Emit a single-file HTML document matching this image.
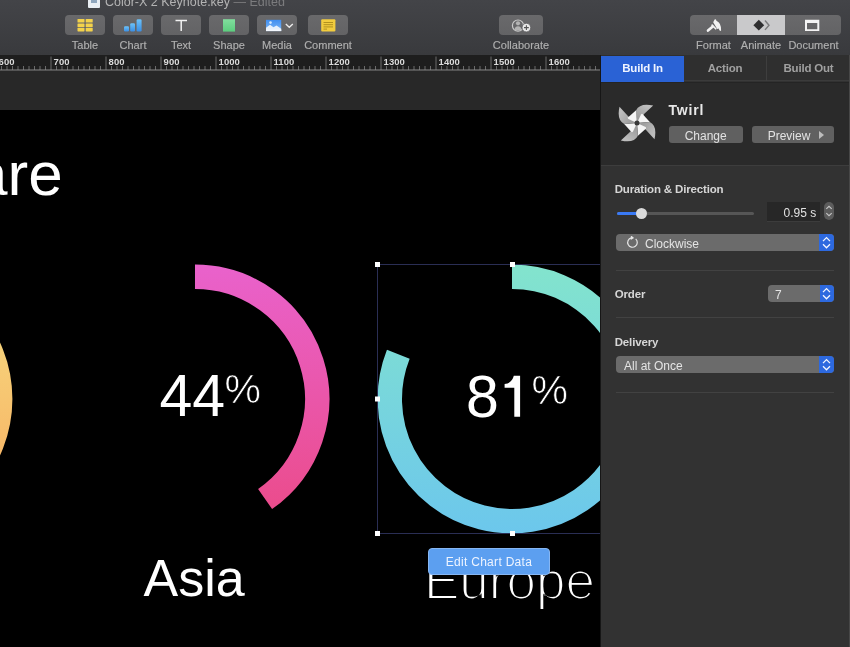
<!DOCTYPE html>
<html><head><meta charset="utf-8">
<style>
*{margin:0;padding:0;box-sizing:border-box}
html,body{width:850px;height:647px;overflow:hidden;background:#000;font-family:"Liberation Sans",sans-serif}
.abs{position:absolute}
#toolbar{left:0;top:0;width:850px;height:55px;background:linear-gradient(#434448,#393a3d)}
.tb{position:absolute;top:15px;width:40px;height:20px;border-radius:4px;background:linear-gradient(#69696b,#636365)}
.lbl{position:absolute;top:39px;font-size:11px;color:#b0b0b0;-webkit-text-stroke:0.15px #b0b0b0;text-align:center;white-space:nowrap}
#title{left:105px;top:-5.5px;font-size:12.5px;color:#b4b4b4;white-space:nowrap}
#ruler{left:0;top:55px;width:600px;height:16px;background:#1e1e1e}
#gray{left:0;top:71px;width:600px;height:39px;background:#282828}
#canvas{left:0;top:110px;width:600px;height:537px;background:#000;overflow:hidden}
#panel{left:600px;top:55px;width:250px;height:592px;background:#323232}
.tab{position:absolute;top:0;height:26px;font-size:11.5px;letter-spacing:-0.2px;font-weight:bold;color:#a0a0a0;text-align:center;line-height:26px}
.sec{position:absolute;left:16px;width:218px;height:1px;background:#424242}
.h{position:absolute;left:16px;font-size:11.5px;font-weight:bold;color:#d6d6d6;white-space:nowrap;letter-spacing:-0.15px}
.pop{position:absolute;height:17.4px;border-radius:4px;background:#6b6b6b;font-size:12px;color:#e4e4e4;white-space:nowrap;line-height:20.5px}
.btn{position:absolute;top:71.3px;height:16.8px;border-radius:3px;background:#606060;font-size:12px;color:#e2e2e2;line-height:20px;white-space:nowrap}
.pop .arr{position:absolute;right:0;top:0;width:14.6px;height:17.4px;background:#2d69df;border-radius:0 4px 4px 0}
</style></head><body><div id="root" style="position:absolute;left:0;top:0;width:850px;height:647px;overflow:hidden;will-change:transform">
<div id="toolbar" class="abs">
  <div id="title" class="abs">Color-X 2 Keynote.key <span style="color:#7c7c7e">— Edited</span></div>
  <div class="abs" style="left:88.3px;top:-4px;width:11.9px;height:11.5px;background:#e9eef3;border-radius:1px"><div class="abs" style="left:3px;top:3px;width:6px;height:4px;background:#8fa6bd"></div></div>
  <div class="tb" style="left:65px"></div>
  <div class="tb" style="left:113px"></div>
  <div class="tb" style="left:161px"></div>
  <div class="tb" style="left:209px"></div>
  <div class="tb" style="left:257px"></div>
  <div class="tb" style="left:308px"></div>
  <div class="tb" style="left:499px;width:44px"></div>
  <div class="lbl" style="left:65px;width:40px">Table</div>
  <div class="lbl" style="left:113px;width:40px">Chart</div>
  <div class="lbl" style="left:161px;width:40px">Text</div>
  <div class="lbl" style="left:209px;width:40px">Shape</div>
  <div class="lbl" style="left:257px;width:40px">Media</div>
  <div class="lbl" style="left:303px;width:50px">Comment</div>
  <div class="lbl" style="left:481px;width:80px">Collaborate</div>
  <div class="abs" style="left:690px;top:15px;width:151px;height:20px;border-radius:4px;background:linear-gradient(#69696b,#636365);overflow:hidden">
    <div class="abs" style="left:47px;top:0;width:48px;height:20px;background:#c9c9cb"></div>
  </div>
  <svg class="abs" style="left:0;top:0" width="850" height="55">
    <defs>
      <linearGradient id="cb" x1="0" y1="0" x2="0" y2="1"><stop offset="0" stop-color="#6cc3fa"/><stop offset="1" stop-color="#3a8ee4"/></linearGradient>
      <linearGradient id="sg" x1="0" y1="0" x2="0" y2="1"><stop offset="0" stop-color="#82de9e"/><stop offset="1" stop-color="#5ccd7e"/></linearGradient>
      <linearGradient id="mg" x1="0" y1="0" x2="0" y2="1"><stop offset="0" stop-color="#3f8ef0"/><stop offset="1" stop-color="#7fb8f6"/></linearGradient>
    </defs>
    <!-- table -->
    <g fill="#f3d24b">
      <rect x="77.5" y="19" width="7" height="3.6" rx="0.6"/><rect x="85.7" y="19" width="7" height="3.6" rx="0.6"/>
      <rect x="77.5" y="23.4" width="7" height="3.6" rx="0.6"/><rect x="85.7" y="23.4" width="7" height="3.6" rx="0.6"/>
      <rect x="77.5" y="27.8" width="7" height="3.6" rx="0.6"/><rect x="85.7" y="27.8" width="7" height="3.6" rx="0.6"/>
    </g>
    <!-- chart -->
    <g fill="url(#cb)">
      <rect x="124" y="26.3" width="5" height="5.2" rx="1.2"/>
      <rect x="130.2" y="23.2" width="4.8" height="8.3" rx="1.2"/>
      <rect x="136.6" y="19.2" width="5" height="12.3" rx="1.2"/>
    </g>
    <!-- text -->
    <path d="M175.5 20.6 H187 M181.2 20.6 V31" stroke="#f2f2f2" stroke-width="1.5" fill="none"/>
    <!-- shape -->
    <rect x="223" y="19.2" width="12" height="12.4" fill="url(#sg)"/>
    <!-- media -->
    <rect x="266" y="19.8" width="15.2" height="11.3" fill="url(#mg)"/>
    <path d="M266 31.1 V27.8 L270 24.8 L273.5 27.3 L276.5 25.5 L281.2 28.8 V31.1 Z" fill="#e6f0fb"/>
    <rect x="266" y="29.6" width="15.2" height="1.5" fill="#f4f8fd"/>
    <circle cx="270.5" cy="22.6" r="1.3" fill="#d6e9fc"/>
    <path d="M285.8 24 L289.3 27.2 L292.8 24" stroke="#ececec" stroke-width="1.4" fill="none"/>
    <!-- comment -->
    <rect x="321.2" y="19.2" width="14.2" height="12.4" rx="1" fill="#f2cc3e"/>
    <path d="M323.5 22.5 H333 M323.5 24.7 H333 M323.5 26.9 H333 M323.5 29.1 H327" stroke="#a98a1c" stroke-width="0.9"/>
    <!-- collaborate -->
    <circle cx="518" cy="25.6" r="5.6" fill="none" stroke="#c9c9c9" stroke-width="1.2"/>
    <circle cx="518" cy="23.3" r="2.1" fill="#b2b2b2"/>
    <path d="M514.3 30.3 Q514.8 26.3 518 26.3 Q521.2 26.3 521.7 30.3 Z" fill="#b2b2b2"/>
    <circle cx="526.4" cy="27.6" r="4.3" fill="#e8e8e8" stroke="#606062" stroke-width="0.8"/>
    <path d="M524 27.6 H528.8 M526.4 25.2 V30" stroke="#555" stroke-width="1.1"/>
    <!-- format -->
    <path d="M713.2 22.2 L714.6 19.6 Q715.3 18.9 716 19.6 L716.4 20.8 L718.6 22.2 Q720.6 24 720.9 27 L721.1 30.6 Q720.4 31.3 719.6 30.5 L718.6 28.6 L717.2 29 Z" fill="#f2f2f2"/>
    <path d="M711.6 24.6 L716.2 29.2" stroke="#f2f2f2" stroke-width="1.6"/>
    <path d="M712.8 26.6 L708 30.6" stroke="#f2f2f2" stroke-width="2.6" stroke-linecap="round"/>
    <!-- animate -->
    <path d="M758.8 19.8 L764.2 25.2 L758.8 30.6 L753.4 25.2 Z" fill="#2e2e30"/>
    <path d="M765 20.5 L769 25.2 L765 29.9" fill="none" stroke="#7a7a7c" stroke-width="1.4"/>
    <!-- document -->
    <path d="M805 19.8 H819.3 V31.1 H805 Z M807 23 V29.2 H817.3 V23 Z" fill="#f4f4f4" fill-rule="evenodd"/>
  </svg>
  <div class="lbl" style="left:690px;width:47px">Format</div>
  <div class="lbl" style="left:737px;width:48px">Animate</div>
  <div class="lbl" style="left:785px;width:57px">Document</div>
</div>
<svg class="abs" style="left:0;top:55px" width="600" height="16" viewBox="0 55 600 16">
  <rect x="0" y="55" width="600" height="16" fill="#1e1e1e"/>
  <path d="M-4.0 56.5V70 M1.5 66V70 M7.0 66V70 M12.5 66V70 M18.0 66V70 M23.5 66V70 M29.0 66V70 M34.5 66V70 M40.0 66V70 M45.5 66V70 M51.0 56.5V70 M56.5 66V70 M62.0 66V70 M67.5 66V70 M73.0 66V70 M78.5 66V70 M84.0 66V70 M89.5 66V70 M95.0 66V70 M100.5 66V70 M106.0 56.5V70 M111.5 66V70 M117.0 66V70 M122.5 66V70 M128.0 66V70 M133.5 66V70 M139.0 66V70 M144.5 66V70 M150.0 66V70 M155.5 66V70 M161.0 56.5V70 M166.5 66V70 M172.0 66V70 M177.5 66V70 M183.0 66V70 M188.5 66V70 M194.0 66V70 M199.5 66V70 M205.0 66V70 M210.5 66V70 M216.0 56.5V70 M221.5 66V70 M227.0 66V70 M232.5 66V70 M238.0 66V70 M243.5 66V70 M249.0 66V70 M254.5 66V70 M260.0 66V70 M265.5 66V70 M271.0 56.5V70 M276.5 66V70 M282.0 66V70 M287.5 66V70 M293.0 66V70 M298.5 66V70 M304.0 66V70 M309.5 66V70 M315.0 66V70 M320.5 66V70 M326.0 56.5V70 M331.5 66V70 M337.0 66V70 M342.5 66V70 M348.0 66V70 M353.5 66V70 M359.0 66V70 M364.5 66V70 M370.0 66V70 M375.5 66V70 M381.0 56.5V70 M386.5 66V70 M392.0 66V70 M397.5 66V70 M403.0 66V70 M408.5 66V70 M414.0 66V70 M419.5 66V70 M425.0 66V70 M430.5 66V70 M436.0 56.5V70 M441.5 66V70 M447.0 66V70 M452.5 66V70 M458.0 66V70 M463.5 66V70 M469.0 66V70 M474.5 66V70 M480.0 66V70 M485.5 66V70 M491.0 56.5V70 M496.5 66V70 M502.0 66V70 M507.5 66V70 M513.0 66V70 M518.5 66V70 M524.0 66V70 M529.5 66V70 M535.0 66V70 M540.5 66V70 M546.0 56.5V70 M551.5 66V70 M557.0 66V70 M562.5 66V70 M568.0 66V70 M573.5 66V70 M579.0 66V70 M584.5 66V70 M590.0 66V70 M595.5 66V70" stroke="#6a6a6a" stroke-width="1" fill="none"/>
  <rect x="0" y="69.5" width="600" height="1" fill="#8c8c8c"/>
  <g font-family="Liberation Sans" font-size="9.5" font-weight="bold" fill="#dcdcdc"><text x="-1.4" y="64.8">600</text><text x="53.6" y="64.8">700</text><text x="108.6" y="64.8">800</text><text x="163.6" y="64.8">900</text><text x="218.6" y="64.8">1000</text><text x="273.6" y="64.8">1100</text><text x="328.6" y="64.8">1200</text><text x="383.6" y="64.8">1300</text><text x="438.6" y="64.8">1400</text><text x="493.6" y="64.8">1500</text><text x="548.6" y="64.8">1600</text></g>
</svg>
<div id="gray" class="abs"></div>
<svg class="abs" style="left:0;top:110px" width="600" height="537" viewBox="0 110 600 537">
  <defs>
    <linearGradient id="gp" gradientUnits="userSpaceOnUse" x1="0" y1="264" x2="0" y2="533">
      <stop offset="0" stop-color="#e962cc"/><stop offset="1" stop-color="#eb4a86"/>
    </linearGradient>
    <linearGradient id="gb" gradientUnits="userSpaceOnUse" x1="0" y1="264" x2="0" y2="533">
      <stop offset="0" stop-color="#83e4cd"/><stop offset="1" stop-color="#6cc7ec"/>
    </linearGradient>
    <linearGradient id="go" gradientUnits="userSpaceOnUse" x1="0" y1="340" x2="0" y2="460">
      <stop offset="0" stop-color="#f6d27a"/><stop offset="1" stop-color="#f8b868"/>
    </linearGradient>
    <filter id="er" x="-10%" y="-10%" width="120%" height="120%"><feMorphology operator="erode" radius="1.05"/></filter>
    <filter id="er2" x="-10%" y="-10%" width="120%" height="120%"><feMorphology operator="erode" radius="0.5"/></filter>
  </defs>
  <rect x="0" y="110" width="600" height="537" fill="#000"/>
  <circle cx="-122" cy="399" r="122.2" fill="none" stroke="url(#go)" stroke-width="24.4"/>
  <path d="M195 276.80 A122.2 122.2 0 0 1 265.09 499.10" fill="none" stroke="url(#gp)" stroke-width="24.4"/>
  <path d="M512 276.80 A122.2 122.2 0 1 1 398.30 354.21" fill="none" stroke="url(#gb)" stroke-width="24.4"/>
  <g font-family="Liberation Sans" fill="#fff">
    <text x="-27" y="194.7" font-size="62">are</text>
    <text x="159.5" y="415.5" font-size="59">44</text>
    <text x="224.5" y="402.5" font-size="41" stroke="#000" stroke-width="0.7">%</text>
    <text x="466" y="417.3" font-size="59">8</text>
    <path d="M520.1 375.8 V416.8 H514.3 V387.8 H504.6 V383.9 Q511.8 383.6 513.8 375.8 Z"/>
    <text x="531.5" y="404" font-size="41" stroke="#000" stroke-width="0.7">%</text>
    <text x="143.5" y="596" font-size="52">Asia</text>
    <text x="424" y="598.8" font-size="53" filter="url(#er)">Europe</text>
  </g>
  <g stroke="#2a2e54" stroke-width="1" fill="none">
    <path d="M377.5 264.5 H600 M377.5 533.5 H600 M377.5 264.5 V533.5"/>
  </g>
  <g fill="#fff">
    <rect x="375" y="262" width="5" height="5"/>
    <rect x="510" y="262" width="5" height="5"/>
    <rect x="375" y="396.5" width="5" height="5"/>
    <rect x="375" y="531" width="5" height="5"/>
    <rect x="510" y="531" width="5" height="5"/>
  </g>
</svg>
<div class="abs" style="left:428.2px;top:548.2px;width:121.5px;height:26.4px;border-radius:4px;background:#5c9ff0;border:1px solid #86b6f3;color:#eef4ff;font-size:12px;text-align:center;line-height:26.5px;letter-spacing:0.3px">Edit Chart Data</div>
<div id="panel" class="abs">
  <div class="abs" style="left:0;top:0;width:1px;height:592px;background:#161616"></div>
  <div class="abs" style="left:1px;top:0;width:249px;height:26px;background:#2f2f2f;border-bottom:1px solid #3b3b3b"></div>
  <div class="tab" style="left:1px;top:1px;width:83px;height:25.5px;background:#2a62d5;color:#eef3ff;line-height:25px">Build In</div>
  <div class="tab" style="left:84px;top:1px;width:82px;height:25.5px;line-height:25px">Action</div>
  <div class="abs" style="left:166px;top:1px;width:1px;height:25px;background:#3e3e3e"></div>
  <div class="tab" style="left:167px;top:1px;width:83px;height:25.5px;line-height:25px">Build Out</div>
  <div class="abs" style="left:1px;top:27px;width:249px;height:83px;background:#2a2a2a;border-top:1.5px solid #242424"></div>
  <div class="abs" style="left:1px;top:110px;width:249px;height:1px;background:#3d3d3d"></div>
  <svg class="abs" style="left:17.4px;top:47.9px" width="40" height="40" viewBox="-20 -20 40 40">
    <defs>
      <linearGradient id="bl" gradientUnits="userSpaceOnUse" x1="0" y1="-6" x2="8" y2="-18">
        <stop offset="0" stop-color="#9c9c9c"/><stop offset="1" stop-color="#bdbdbd"/>
      </linearGradient>
    </defs>
    <g id="blade"><path d="M0 0 L-0.9 -12.8 Q3 -20.5 16.2 -17.5 L6.5 -8.6 Z" fill="url(#bl)"/><path d="M0 0 L4 -8.6 Q4.9 -9.6 5.8 -8.8 L12.8 -0.9 Z" fill="#f4f4f4"/></g>
    <use href="#blade" transform="rotate(90)"/>
    <use href="#blade" transform="rotate(180)"/>
    <use href="#blade" transform="rotate(270)"/>
    <circle r="2.5" fill="#383838"/>
  </svg>
  <div class="abs" style="left:68.5px;top:47px;font-size:14px;font-weight:bold;color:#e8e8e8;letter-spacing:0.8px">Twirl</div>
  <div class="btn" style="left:68.5px;width:74.3px;text-align:center">Change</div>
  <div class="btn" style="left:152.2px;width:81.8px"><span style="position:absolute;left:15.5px">Preview</span><span style="position:absolute;left:66.6px;top:4.4px;width:0;height:0;border-left:5.6px solid #bdbdbd;border-top:4px solid transparent;border-bottom:4px solid transparent"></span></div>
  <div class="h" style="left:14.7px;top:128.2px">Duration &amp; Direction</div>
  <div class="abs" style="left:16.5px;top:156.8px;width:137.1px;height:3px;border-radius:2px;background:#565656"></div>
  <div class="abs" style="left:16.5px;top:156.8px;width:25px;height:3px;border-radius:2px;background:#3a7af5"></div>
  <div class="abs" style="left:36.2px;top:152.8px;width:11px;height:11px;border-radius:50%;background:#dadada"></div>
  <div class="abs" style="left:167.2px;top:146.9px;width:52.8px;height:19.8px;background:#272727;border-bottom:1px solid #3c3c3c;font-size:12px;color:#e2e2e2;text-align:right;padding-right:3.7px;line-height:22px">0.95 s</div>
  <div class="abs" style="left:224px;top:147.3px;width:9.8px;height:18.1px;border-radius:5px;background:#5c5c5c"><svg class="abs" style="left:0;top:0" width="10" height="18" viewBox="0 0 10 18"><path d="M2.3 6.8 L5 4.3 L7.7 6.8 M2.3 11.2 L5 13.7 L7.7 11.2" fill="none" stroke="#c8c8c8" stroke-width="1.1"/></svg></div>
  <div class="pop" style="left:16px;top:178.9px;width:217.8px"><svg class="abs" style="left:10px;top:2px" width="13" height="13" viewBox="-6.5 -6.5 13 13"><path d="M3.2 -3.6 A4.8 4.8 0 1 1 -1.2 -4.7" fill="none" stroke="#e6e6e6" stroke-width="1.2"/><path d="M-1.6 -7.2 L1.6 -4.6 L-1.8 -2.4 Z" fill="#e6e6e6"/></svg><span style="position:absolute;left:29px">Clockwise</span><div class="arr"><svg class="abs" style="right:0;top:0" width="15" height="17.4" viewBox="0 0 15 17.4"><path d="M4 7.1 L7.5 3.6 L11 7.1 M4 10.3 L7.5 13.8 L11 10.3" fill="none" stroke="#f4f7ff" stroke-width="1.3"/></svg></div></div>
  <div class="sec" style="top:215.4px"></div>
  <div class="h" style="left:14.7px;top:233.4px">Order</div>
  <div class="pop" style="left:167.9px;top:229.7px;width:66.2px"><span style="position:absolute;left:7px">7</span><div class="arr" style="width:14.1px"><svg class="abs" style="right:0;top:0" width="15" height="17.4" viewBox="0 0 15 17.4"><path d="M4 7.1 L7.5 3.6 L11 7.1 M4 10.3 L7.5 13.8 L11 10.3" fill="none" stroke="#f4f7ff" stroke-width="1.3"/></svg></div></div>
  <div class="sec" style="top:261.6px"></div>
  <div class="h" style="left:14.7px;top:280.9px">Delivery</div>
  <div class="pop" style="left:16px;top:301px;width:218px"><span style="position:absolute;left:8px">All at Once</span><div class="arr"><svg class="abs" style="right:0;top:0" width="15" height="17.4" viewBox="0 0 15 17.4"><path d="M4 7.1 L7.5 3.6 L11 7.1 M4 10.3 L7.5 13.8 L11 10.3" fill="none" stroke="#f4f7ff" stroke-width="1.3"/></svg></div></div>
  <div class="sec" style="top:337.4px"></div>
  <div class="abs" style="left:248.6px;top:0;width:1.4px;height:592px;background:#474747"></div>
</div>
</div></body></html>
